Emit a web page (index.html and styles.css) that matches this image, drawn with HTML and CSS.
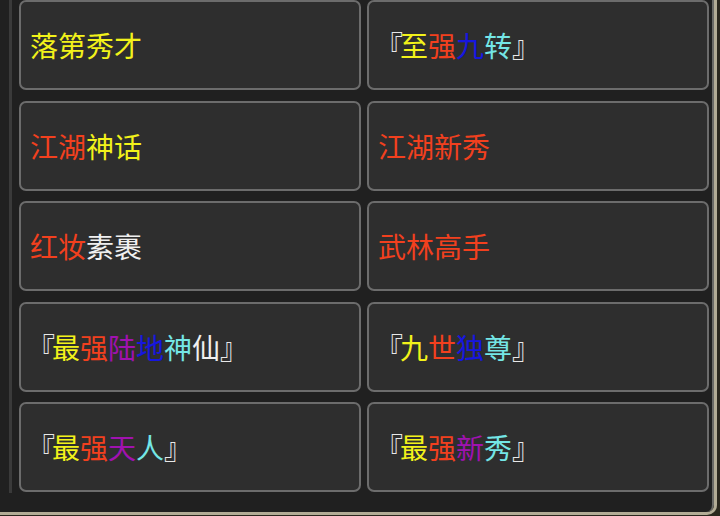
FILE: index.html
```html
<!DOCTYPE html>
<html lang="zh">
<head>
  <meta charset="UTF-8">
  <meta name="viewport" content="width=device-width, initial-scale=1.0">
  <title>称号</title>
  <link rel="stylesheet" href="styles.css">
</head>
<body>
  <div class="frame">
    <div class="panel">
      <div class="track">
        <ul class="titles">
          <li class="title"><span class="y">落第秀才</span></li>
          <li class="title"><span class="br open">『</span><span class="y">至</span><span class="r">强</span><span class="b">九</span><span class="c">转</span><span class="br">』</span></li>
          <li class="title"><span class="r">江湖</span><span class="y">神话</span></li>
          <li class="title"><span class="r">江湖新秀</span></li>
          <li class="title"><span class="r">红妆</span><span class="w">素裹</span></li>
          <li class="title"><span class="r">武林高手</span></li>
          <li class="title"><span class="br open">『</span><span class="y">最</span><span class="r">强</span><span class="p">陆</span><span class="b">地</span><span class="c">神</span><span class="w">仙</span><span class="br">』</span></li>
          <li class="title"><span class="br open">『</span><span class="y">九</span><span class="r">世</span><span class="b">独</span><span class="c">尊</span><span class="br">』</span></li>
          <li class="title"><span class="br open">『</span><span class="y">最</span><span class="r">强</span><span class="p">天</span><span class="c">人</span><span class="br">』</span></li>
          <li class="title"><span class="br open">『</span><span class="y">最</span><span class="r">强</span><span class="p">新</span><span class="c">秀</span><span class="br">』</span></li>
        </ul>
      </div>
    </div>
  </div>
</body>
</html>
```

FILE: styles.css
```css
body {
  margin: 0;
  background: #2b281e;
  font-family: "Noto Sans CJK SC", "Noto Sans", sans-serif;
  overflow: hidden;
}
.frame {
  width: 714px;
  height: 512px;
  border-right: 3px solid #b3ac96;
  border-bottom: 3px solid #b3ac96;
  border-bottom-right-radius: 10px;
  overflow: hidden;
}
.panel {
  height: 100%;
  background: #202020;
  border-right: 2px solid #6a6a66;
  border-bottom: 1px solid #6a6a66;
  border-bottom-right-radius: 8px;
  padding-left: 9px;
}
.track {
  border-left: 3px solid #3a3a3a;
  padding-left: 7px;
  height: 493px;
}
.titles {
  list-style: none;
  margin: 0;
  padding: 0;
  display: grid;
  grid-template-columns: 342px 342px;
  grid-auto-rows: 90px;
  column-gap: 6px;
  row-gap: 10.5px;
}
.title {
  box-sizing: border-box;
  background: #2e2e2e;
  border: 2px solid #6c6c6c;
  border-radius: 7px;
  display: flex;
  align-items: center;
  padding-left: 9px;
  font-size: 28px;
  line-height: 1;
}
/* opening bracket sits tighter against the name */
.open {
  margin-left: -3px;
  letter-spacing: -3px;
}
.br { color: #e8e8e8; }
.y { color: #f2f21a; }
.r { color: #f2401e; }
.b { color: #1616e0; }
.c { color: #74e6e6; }
.p { color: #a012b0; }
.w { color: #f0f0f0; }
```
